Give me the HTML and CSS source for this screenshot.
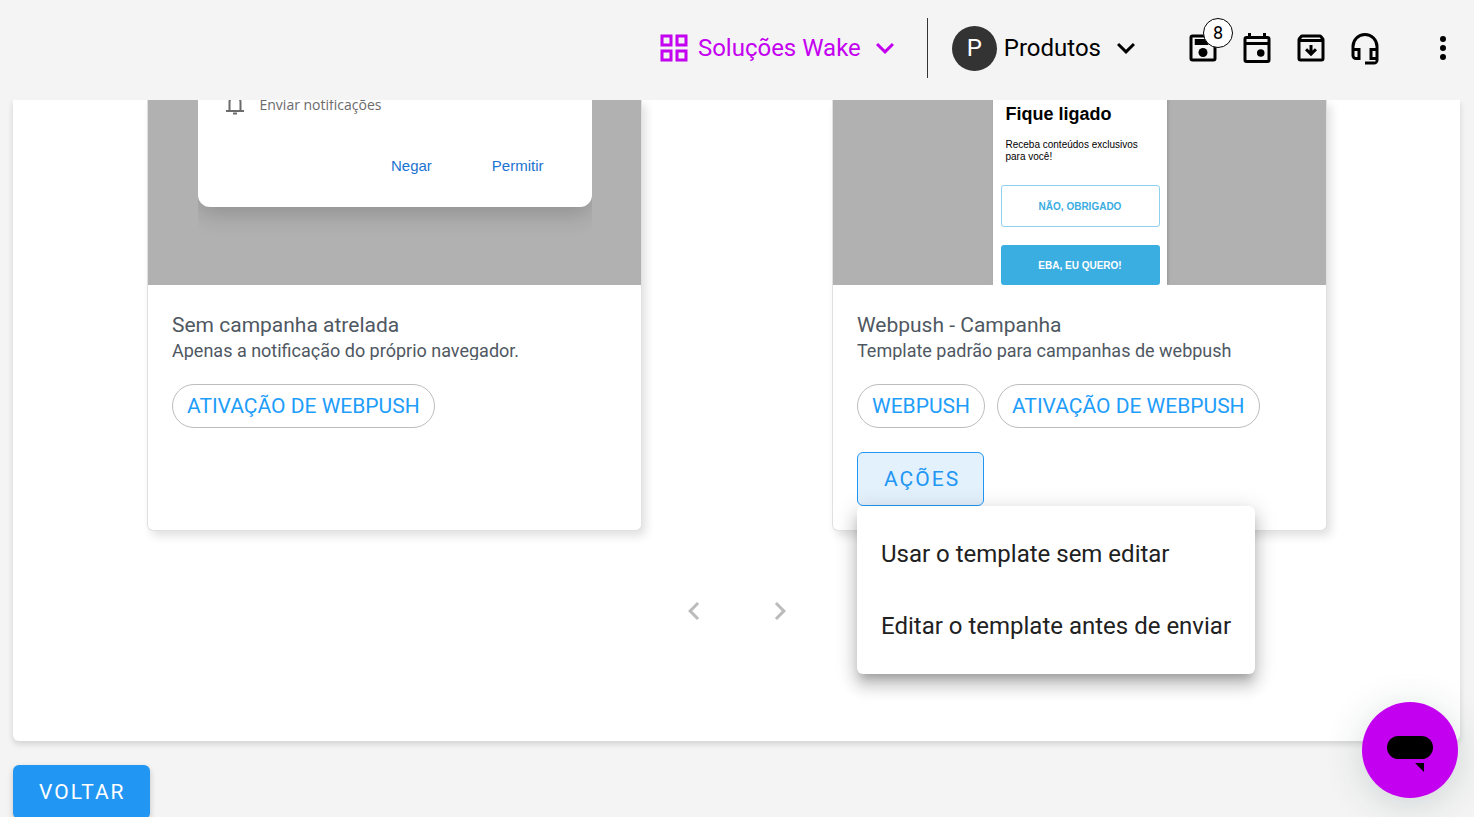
FILE: index.html
```html
<!DOCTYPE html>
<html lang="pt-BR">
<head>
  <meta charset="UTF-8" />
  <meta name="viewport" content="width=device-width, initial-scale=1.0" />
  <title>Templates de Webpush</title>
  <link rel="stylesheet" href="styles.css">
</head>
<body>
  <header class="topbar">
    <button class="solutions" type="button">
      <svg class="icon" viewBox="0 0 24 24"><path fill="none" stroke="currentColor" stroke-width="2" d="M4 4h6v6H4zM14 4h6v6h-6zM4 14h6v6H4zM14 14h6v6h-6z" /></svg>
      <span>Soluções Wake</span>
      <svg class="icon chevron" viewBox="0 0 24 24"><path d="M7.41 8.59 12 13.17l4.59-4.58L18 10l-6 6-6-6z" /></svg>
    </button>
    <button class="account" type="button">
      <span class="avatar">P</span>
      <span>Produtos</span>
      <svg class="icon chevron" viewBox="0 0 24 24"><path d="M7.41 8.59 12 13.17l4.59-4.58L18 10l-6 6-6-6z" /></svg>
    </button>
    <nav class="shortcuts">
      <button class="icon-btn" type="button" aria-label="Salvos">
        <svg class="icon" viewBox="0 0 24 24"><rect x="4" y="4" width="16" height="16" rx="1" fill="none" stroke="currentColor" stroke-width="2" /><path d="M6.500 6h9v4h-9z" /><circle cx="12" cy="15" r="3" /></svg>
        <span class="badge">8</span>
      </button>
      <button class="icon-btn" type="button" aria-label="Calendário">
        <svg class="icon" viewBox="0 0 24 24"><path d="M19 4h-1V2h-2v2H8V2H6v2H5a2 2 0 0 0-2 2v14a2 2 0 0 0 2 2h14a2 2 0 0 0 2-2V6a2 2 0 0 0-2-2zm0 16H5V10h14zm0-12H5V6h14z" /><circle cx="14.500" cy="15.300" r="2.500" /></svg>
      </button>
      <button class="icon-btn" type="button" aria-label="Arquivo">
        <svg class="icon" viewBox="0 0 24 24"><path d="M20.540 5.230l-1.390-1.680A1.450 1.450 0 0 0 18 3H6c-.470 0-.880.210-1.160.550L3.460 5.230A1.970 1.970 0 0 0 3 6.500V19a2 2 0 0 0 2 2h14a2 2 0 0 0 2-2V6.500c0-.480-.170-.930-.460-1.270zM6.240 5h11.520l.830 1H5.420zM5 19V8h14v11zM11 10v3.700l-1.600-1.600L8 13.500l4 4 4-4-1.400-1.400-1.600 1.600V10z" /></svg>
      </button>
      <button class="icon-btn" type="button" aria-label="Suporte">
        <svg class="icon" viewBox="0 0 24 24"><path d="M19 14v4h-2v-4zM7 14v4H6a1 1 0 0 1-1-1v-3zM12 2a9 9 0 0 0-9 9v6a3 3 0 0 0 3 3h3v-8H5v-1a7 7 0 0 1 14 0v1h-4v8h4v1h-7v2h6a3 3 0 0 0 3-3V11a9 9 0 0 0-9-9z" /></svg>
      </button>
      <button class="icon-btn more" type="button" aria-label="Mais opções">
        <svg class="icon" viewBox="0 0 24 24"><path d="M12 8a2 2 0 1 0 0-4 2 2 0 0 0 0 4zm0 2a2 2 0 1 0 0 4 2 2 0 0 0 0-4zm0 6a2 2 0 1 0 0 4 2 2 0 0 0 0-4z" /></svg>
      </button>
    </nav>
  </header>

  <main class="content">
    <section class="panel">
      <div class="templates">
        <article class="card">
          <div class="media">
            <div class="browser">
              <div class="prompt">
                <p class="prompt-text">
                  <svg class="bell" viewBox="0 0 24 24"><path fill="none" stroke="currentColor" stroke-width="2" d="M6.500 18V10a5.500 5.500 0 0 1 11 0v8M3 19h18M10 21.500h4" /></svg>
                  Enviar notificações
                </p>
                <div class="prompt-actions">
                  <button type="button">Negar</button>
                  <button type="button">Permitir</button>
                </div>
              </div>
            </div>
          </div>
          <div class="card-body">
            <h2>Sem campanha atrelada</h2>
            <p class="description">Apenas a notificação do próprio navegador.</p>
            <div class="chips">
              <span class="chip">ATIVAÇÃO DE WEBPUSH</span>
            </div>
          </div>
        </article>

        <article class="card">
          <div class="media">
            <div class="popup">
              <h3>Fique ligado</h3>
              <p>Receba conteúdos exclusivos para você!</p>
              <button class="popup-no" type="button">NÃO, OBRIGADO</button>
              <button class="popup-yes" type="button">EBA, EU QUERO!</button>
            </div>
          </div>
          <div class="card-body">
            <h2>Webpush - Campanha</h2>
            <p class="description">Template padrão para campanhas de webpush</p>
            <div class="chips">
              <span class="chip">WEBPUSH</span>
              <span class="chip">ATIVAÇÃO DE WEBPUSH</span>
            </div>
            <div class="actions">
              <button class="btn btn-outlined" type="button" aria-expanded="true">AÇÕES</button>
              <div class="menu">
                <button type="button">Usar o template sem editar</button>
                <button type="button">Editar o template antes de enviar</button>
              </div>
            </div>
          </div>
        </article>
      </div>

      <div class="pagination">
        <button type="button" aria-label="Anterior" disabled>
          <svg class="icon" viewBox="0 0 24 24"><path d="M15.410 7.410 14 6l-6 6 6 6 1.410-1.410L10.830 12z" /></svg>
        </button>
        <button type="button" aria-label="Próxima" disabled>
          <svg class="icon" viewBox="0 0 24 24"><path d="M8.590 16.590 13.170 12 8.590 7.410 10 6l6 6-6 6z" /></svg>
        </button>
      </div>
    </section>

    <button class="btn btn-primary" type="button">VOLTAR</button>
  </main>

  <button class="chat" type="button" aria-label="Abrir chat">
    <svg viewBox="0 0 96 96"><rect x="25" y="34" width="46" height="23" rx="11.500" /><path d="M53 61h9v9z" /></svg>
  </button>
</body>
</html>
```
FILE: styles.css
```css
* {
  box-sizing: border-box;
}
body {
  font-family: Roboto, sans-serif;
  margin: 0;
  height: 100vh;
  display: flex;
  flex-direction: column;
  overflow: hidden;
  background: #f4f4f4;
  color: #000;
}
h2, h3, p {
  margin: 0;
}
button {
  font: inherit;
  color: inherit;
  background: none;
  border: none;
  padding: 0;
  cursor: pointer;
}
.icon {
  display: block;
  width: 36px;
  height: 36px;
  fill: currentColor;
}

/* topo */
.topbar {
  flex: none;
  display: flex;
  justify-content: flex-end;
  align-items: center;
  height: 100px;
  padding: 0 13px 4px 0;
  font-size: 24px;
}
.solutions, .account {
  display: flex;
  align-items: center;
}
.solutions {
  gap: 6px;
  height: 60px;
  padding-right: 24px;
  border-right: 1px solid #333;
  color: #c400f0;
}
.account {
  gap: 7px;
  padding-left: 24px;
}
.avatar {
  display: flex;
  align-items: center;
  justify-content: center;
  width: 45px;
  height: 45px;
  border-radius: 50%;
  background: #333;
  color: #fff;
}
.shortcuts {
  display: flex;
  gap: 18px;
  margin-left: 41px;
}
.icon-btn {
  position: relative;
}
.more {
  margin-left: 24px;
}
.badge {
  position: absolute;
  top: -12px;
  left: 18px;
  width: 30px;
  height: 30px;
  border: 1px solid #000;
  border-radius: 50%;
  background: #fff;
  font-size: 18px;
  line-height: 28px;
  text-align: center;
}

/* painel */
.content {
  flex: 1;
  min-height: 0;
  padding: 0 14px 0 13px;
  overflow: hidden;
}
.panel {
  padding: 0 38px 103px 39px;
  margin-bottom: 24px;
  background: #fff;
  border-radius: 0 0 6px 6px;
  box-shadow: 0 3px 6px rgba(0,0,0,0.14);
}
.templates {
  display: grid;
  grid-template-columns: 1fr 1fr;
  justify-items: center;
}
.card {
  display: flex;
  flex-direction: column;
  width: 100%;
  max-width: 495px;
  border: 1px solid #e0e0e0;
  border-top: none;
  border-radius: 0 0 6px 6px;
  background: #fff;
  box-shadow: 4px 5px 10px rgba(0,0,0,0.12);
}
.media {
  display: flex;
  justify-content: center;
  align-items: flex-end;
  height: 185px;
  overflow: hidden;
  background: #b1b1b1;
}
.card-body {
  padding: 24px;
}
.card-body h2 {
  font-size: 21px;
  font-weight: 400;
  line-height: 32px;
  color: #4f5862;
}
.description {
  font-size: 18px;
  line-height: 19px;
  color: #4f5862;
  overflow: hidden;
}
.chips {
  display: flex;
  flex-wrap: wrap;
  gap: 12px;
  margin: 24px 0;
}
.card-body > :last-child {
  margin-bottom: 0;
}
.chip {
  height: 44px;
  padding: 0 14px;
  border: 1px solid #bdbdbd;
  border-radius: 22px;
  font-size: 21px;
  line-height: 42px;
  color: #1e9dfa;
}

/* previa da permissao do navegador */
.browser {
  width: 394px;
  padding-bottom: 45px;
  margin-bottom: 33px;
  overflow: hidden;
}
.prompt {
  padding: 0 48px 27px 25px;
  border-radius: 0 0 12px 12px;
  background: #fff;
  box-shadow: 0 6px 24px rgba(0,0,0,0.2);
}
.prompt-text {
  display: flex;
  align-items: center;
  gap: 13px;
  height: 28px;
  font-family: "Open Sans", sans-serif;
  font-size: 14px;
  color: #6b6b6b;
}
.bell {
  width: 24px;
  height: 24px;
}
.prompt-actions {
  display: flex;
  justify-content: flex-end;
  gap: 60px;
  padding-top: 34px;
  font-family: "Liberation Sans", Arial, sans-serif;
  font-size: 15px;
  line-height: 28px;
  color: #1a73d1;
}

/* previa do popup de webpush */
.popup {
  display: flex;
  flex-direction: column;
  width: 174px;
  padding: 24px 7px 0 8px;
  background: #fff;
  box-shadow: 1px 0 3px rgba(0,0,0,0.16);
  font-family: "Liberation Sans", Arial, sans-serif;
  font-size: 10px;
}
.popup h3 {
  padding: 0 5px;
  font-size: 18px;
  line-height: 20px;
}
.popup p {
  padding: 15px 5px 22px;
  line-height: 12px;
}
.popup button {
  height: 42px;
  border: 1px solid #8fd0ef;
  border-radius: 3px;
  font-weight: bold;
  color: #3aade1;
}
.popup .popup-yes {
  height: 40px;
  margin-top: 18px;
  border: none;
  background: #3aade1;
  color: #fff;
}

/* botoes */
.btn {
  height: 54px;
  padding: 0 24px 0 26px;
  border-radius: 6px;
  font-size: 21px;
  letter-spacing: 2px;
}
.btn-outlined {
  padding-right: 23px;
  border: 1px solid #2196f3;
  background: #e3f1fd;
  color: #2196f3;
}
.btn-primary {
  background: #2196f3;
  color: #fff;
  box-shadow: 0 3px 6px rgba(0,0,0,0.2);
}
.actions {
  position: relative;
  display: flex;
}
.menu {
  position: absolute;
  top: 100%;
  left: 0;
  padding: 12px 0;
  border-radius: 6px;
  background: #fff;
  box-shadow: 0 8px 8px -4px rgba(0,0,0,0.2), 0 12px 15px 2px rgba(0,0,0,0.14), 0 4px 21px 3px rgba(0,0,0,0.12);
}
.menu button {
  display: block;
  width: 100%;
  height: 72px;
  padding: 0 24px;
  font-size: 24px;
  text-align: left;
  white-space: nowrap;
  color: #212121;
}
.pagination {
  display: flex;
  justify-content: center;
  gap: 32px;
  padding-top: 53px;
}
.pagination button {
  display: flex;
  align-items: center;
  justify-content: center;
  width: 54px;
  height: 54px;
  color: #bbb;
}

.chat {
  position: fixed;
  right: 16px;
  bottom: 19px;
  width: 96px;
  height: 96px;
  border-radius: 50%;
  background: #c400f0;
  box-shadow: 0 6px 40px rgba(0,50,50,0.16);
}
.chat svg {
  display: block;
}
```
